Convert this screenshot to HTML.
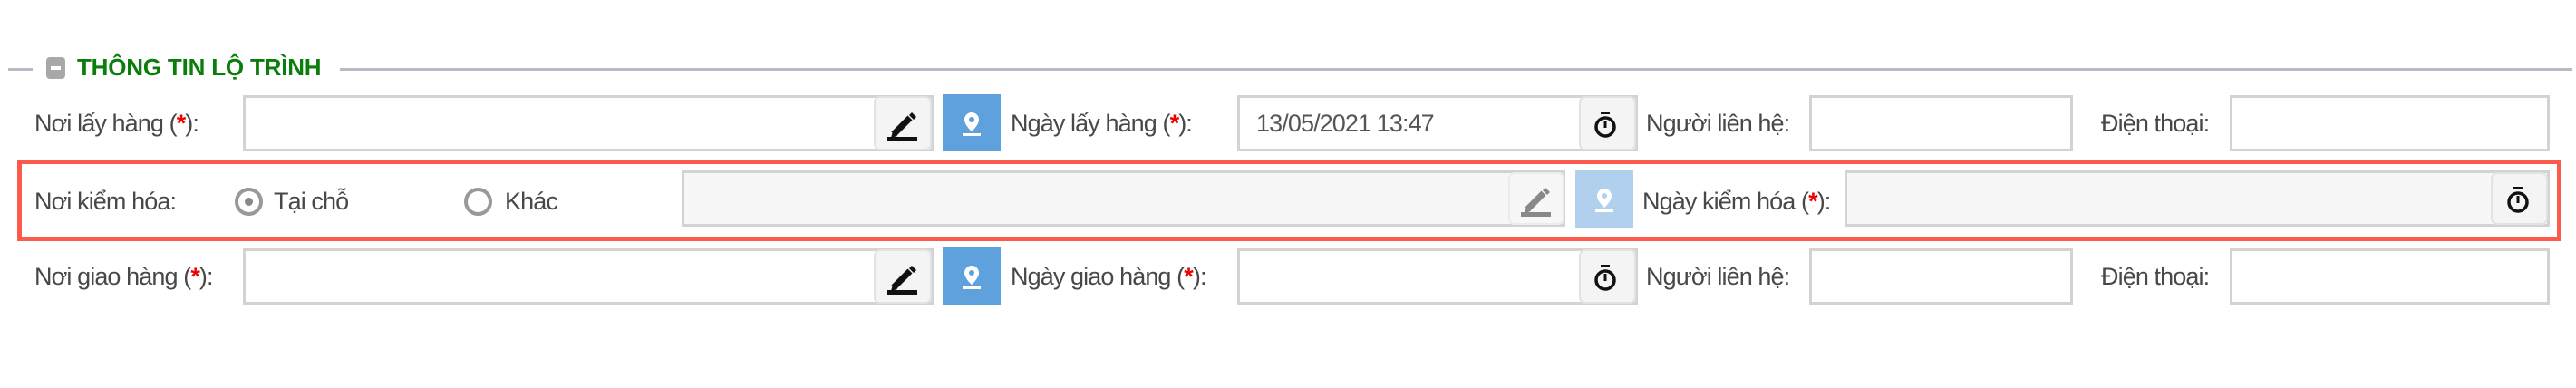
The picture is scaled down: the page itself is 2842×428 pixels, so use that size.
<!DOCTYPE html>
<html><head><meta charset="utf-8">
<style>
html,body{margin:0;padding:0;background:#fff;width:2842px;height:428px;overflow:hidden;position:relative;font-family:"Liberation Sans",sans-serif;}
.a{position:absolute;}
.lbl{position:absolute;font-size:27px;letter-spacing:-0.9px;color:#484848;line-height:30px;}
.lbl b{color:#e00;font-weight:bold;}
.inp{position:absolute;box-sizing:border-box;border:3px solid #d3d3d3;background:#fff;}
.dis{background:#f7f7f7;}
.btn{position:absolute;box-sizing:border-box;border:2px solid #e2e2e2;border-radius:7px;background:#f4f4f4;}
.blue{position:absolute;background:#5fa1dc;}
.lblue{position:absolute;background:#b1d0ee;}
</style></head><body>
<div class="a" style="left:9px;top:75px;width:27px;height:3px;background:#b9b9c8"></div>
<div class="a" style="left:375px;top:75px;width:2463px;height:3px;background:#b9b9c8"></div>
<div class="a" style="left:51px;top:63px;width:21px;height:24px;background:#a8a8a8;border-radius:4px"><div style="position:absolute;left:5px;top:10px;width:11px;height:4px;background:#fff"></div></div>
<div class="a" style="left:85px;top:59px;font-size:26px;font-weight:bold;color:#0a7d0a;line-height:30px;letter-spacing:-0.2px">THÔNG TIN LỘ TRÌNH</div>

<!-- row 1 -->
<div class="lbl" style="left:38px;top:121px">Nơi lấy hàng (<b>*</b>):</div>
<div class="inp" style="left:268px;top:105px;width:762px;height:62px"></div>
<div class="btn" style="left:964px;top:106px;width:64px;height:60px"><svg width="60" height="56"><path d="M20 40 L38 22" stroke="#111" stroke-width="7"/><path d="M17 44 L19 37 L24 42 Z" fill="#111"/><path d="M37 19 L40 16 L45 21 L42 24 Z" fill="#111"/><rect x="13" y="43" width="33" height="5" fill="#111"/></svg></div>
<div class="blue" style="left:1040px;top:104px;width:64px;height:63px"><svg width="64" height="63"><path d="M32 20 a8 8 0 0 1 8 8 c0 6 -8 13 -8 13 c0 0 -8 -7 -8 -13 a8 8 0 0 1 8 -8z" fill="#fff"/><circle cx="32" cy="28" r="3" fill="#5fa1dc"/><rect x="22" y="43" width="20" height="3" fill="#fff"/></svg></div>
<div class="lbl" style="left:1115px;top:121px">Ngày lấy hàng (<b>*</b>):</div>
<div class="inp" style="left:1365px;top:105px;width:442px;height:62px"></div>
<div class="lbl" style="left:1386px;top:121px;color:#555">13/05/2021 13:47</div>
<div class="btn" style="left:1742px;top:106px;width:63px;height:60px"><svg width="59" height="56"><rect x="22" y="15" width="10" height="3" fill="#111"/><circle cx="27" cy="32" r="10" fill="none" stroke="#111" stroke-width="3.5"/><rect x="25.5" y="25" width="3" height="8" fill="#111"/></svg></div>
<div class="lbl" style="left:1816px;top:121px">Người liên hệ:</div>
<div class="inp" style="left:1996px;top:105px;width:291px;height:62px"></div>
<div class="lbl" style="left:2318px;top:121px">Điện thoại:</div>
<div class="inp" style="left:2460px;top:105px;width:353px;height:62px"></div>

<!-- row 2 -->
<div class="a" style="left:19px;top:176px;width:2807px;height:90px;box-sizing:border-box;border:5px solid #fb5a4c"></div>
<div class="lbl" style="left:38px;top:207px">Nơi kiểm hóa:</div>
<div class="a" style="left:259px;top:207px;width:31px;height:31px;box-sizing:border-box;border:4px solid #999;border-radius:50%"><div style="position:absolute;left:7px;top:7px;width:9px;height:9px;border-radius:50%;background:#888"></div></div>
<div class="lbl" style="left:302px;top:207px">Tại chỗ</div>
<div class="a" style="left:512px;top:207px;width:31px;height:31px;box-sizing:border-box;border:4px solid #999;border-radius:50%"></div>
<div class="lbl" style="left:557px;top:207px">Khác</div>
<div class="inp dis" style="left:752px;top:188px;width:975px;height:62px"></div>
<div class="btn" style="left:1664px;top:190px;width:62px;height:58px;background:#f7f7f7;border-color:#ececec"><svg width="58" height="54"><path d="M19 39 L37 21" stroke="#888" stroke-width="7"/><path d="M16 43 L18 36 L23 41 Z" fill="#888"/><path d="M36 18 L39 15 L44 20 L41 23 Z" fill="#888"/><rect x="12" y="42" width="33" height="5" fill="#888"/></svg></div>
<div class="lblue" style="left:1738px;top:188px;width:64px;height:63px"><svg width="64" height="63"><path d="M32 20 a8 8 0 0 1 8 8 c0 6 -8 13 -8 13 c0 0 -8 -7 -8 -13 a8 8 0 0 1 8 -8z" fill="#fff"/><circle cx="32" cy="28" r="3" fill="#b1d0ee"/><rect x="22" y="43" width="20" height="3" fill="#fff"/></svg></div>
<div class="lbl" style="left:1812px;top:207px">Ngày kiểm hóa (<b>*</b>):</div>
<div class="inp dis" style="left:2035px;top:188px;width:778px;height:62px"></div>
<div class="btn" style="left:2748px;top:190px;width:63px;height:58px;background:#f4f4f4"><svg width="59" height="54"><rect x="23" y="14" width="10" height="3" fill="#111"/><circle cx="28" cy="31" r="10" fill="none" stroke="#111" stroke-width="3.5"/><rect x="26.5" y="24" width="3" height="8" fill="#111"/></svg></div>

<!-- row 3 -->
<div class="lbl" style="left:38px;top:290px">Nơi giao hàng (<b>*</b>):</div>
<div class="inp" style="left:268px;top:274px;width:762px;height:62px"></div>
<div class="btn" style="left:964px;top:275px;width:64px;height:60px"><svg width="60" height="56"><path d="M20 40 L38 22" stroke="#111" stroke-width="7"/><path d="M17 44 L19 37 L24 42 Z" fill="#111"/><path d="M37 19 L40 16 L45 21 L42 24 Z" fill="#111"/><rect x="13" y="43" width="33" height="5" fill="#111"/></svg></div>
<div class="blue" style="left:1040px;top:273px;width:64px;height:63px"><svg width="64" height="63"><path d="M32 20 a8 8 0 0 1 8 8 c0 6 -8 13 -8 13 c0 0 -8 -7 -8 -13 a8 8 0 0 1 8 -8z" fill="#fff"/><circle cx="32" cy="28" r="3" fill="#5fa1dc"/><rect x="22" y="43" width="20" height="3" fill="#fff"/></svg></div>
<div class="lbl" style="left:1115px;top:290px">Ngày giao hàng (<b>*</b>):</div>
<div class="inp" style="left:1365px;top:274px;width:442px;height:62px"></div>
<div class="btn" style="left:1742px;top:275px;width:63px;height:60px"><svg width="59" height="56"><rect x="22" y="15" width="10" height="3" fill="#111"/><circle cx="27" cy="32" r="10" fill="none" stroke="#111" stroke-width="3.5"/><rect x="25.5" y="25" width="3" height="8" fill="#111"/></svg></div>
<div class="lbl" style="left:1816px;top:290px">Người liên hệ:</div>
<div class="inp" style="left:1996px;top:274px;width:291px;height:62px"></div>
<div class="lbl" style="left:2318px;top:290px">Điện thoại:</div>
<div class="inp" style="left:2460px;top:274px;width:353px;height:62px"></div>
</body></html>
